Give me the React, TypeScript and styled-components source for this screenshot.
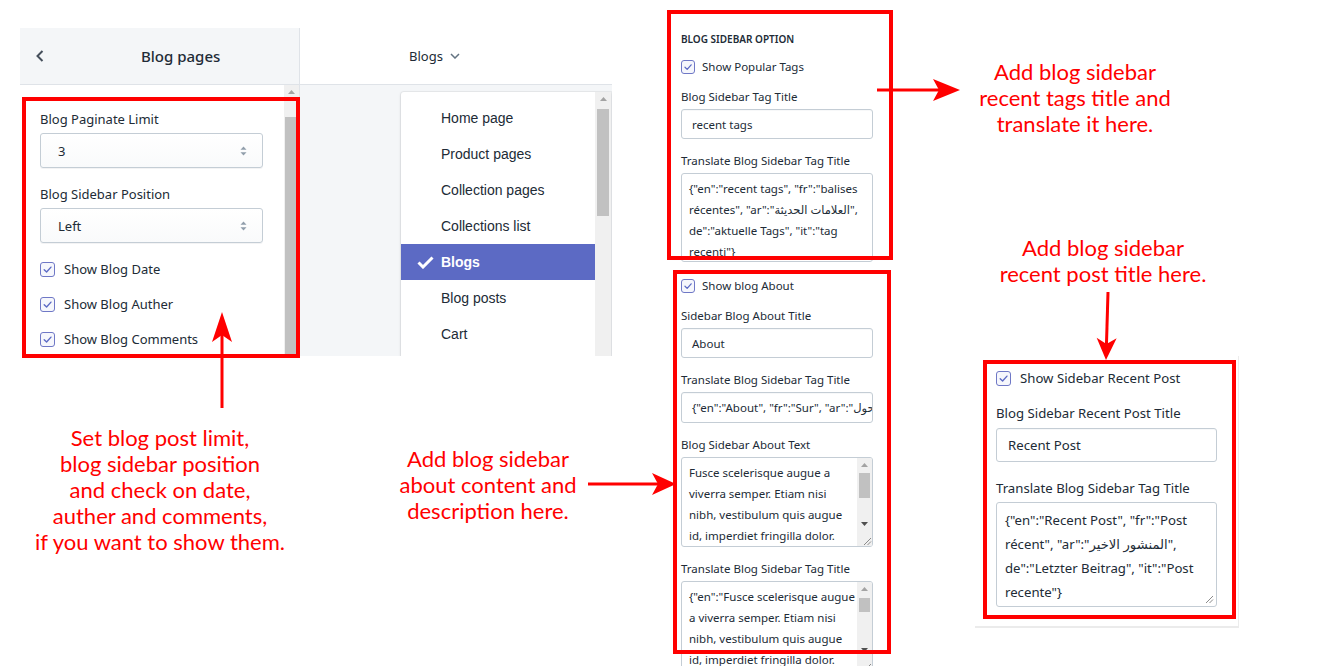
import React from 'react';
import styled, { createGlobalStyle } from 'styled-components';

const GlobalStyle = createGlobalStyle`
  html, body {
    margin: 0;
    padding: 0;
    background: #ffffff;
  }
  body {
    font-family: "Noto Sans", "DejaVu Sans", sans-serif;
  }
`;

const UI = `"Noto Sans", "DejaVu Sans", sans-serif`;
const RED = '#ff0000';

const Canvas = styled.div`
  position: relative;
  width: 1333px;
  height: 666px;
  overflow: hidden;
  background: #ffffff;
`;

/* ---------- left screenshot: theme editor ---------- */

const EditorShot = styled.div`
  position: absolute;
  left: 20px;
  top: 28px;
  width: 592px;
  height: 328px;
  display: flex;
  overflow: hidden;
  font-family: ${UI};
  color: #212b36;
`;

const Sidebar = styled.aside`
  width: 280px;
  flex: none;
  display: flex;
  flex-direction: column;
  border-right: 1px solid #dfe3e8;
  box-sizing: border-box;
`;

const SidebarHeader = styled.div`
  height: 57px;
  flex: none;
  box-sizing: border-box;
  background: #f4f6f8;
  border-bottom: 1px solid #dfe3e8;
  display: flex;
  align-items: center;
  padding-left: 16px;
  gap: 97px;
  font-size: 15px;
  font-weight: 500;
`;

const SidebarBody = styled.div`
  flex: 1;
  display: flex;
  background: #ffffff;
  min-height: 0;
`;

const SettingsList = styled.div`
  flex: 1;
  padding: 24px 21px 0 20px;
  display: flex;
  flex-direction: column;
`;

const Field = styled.div<{ $gap: number; $after: number }>`
  display: flex;
  flex-direction: column;
  gap: ${p => p.$gap}px;
  margin-bottom: ${p => p.$after}px;
`;

const Label = styled.div<{ $size: number; $lh: number }>`
  font-size: ${p => p.$size}px;
  line-height: ${p => p.$lh}px;
  white-space: nowrap;
  color: #212b36;
`;

const SelectBox = styled.div`
  height: 35px;
  box-sizing: border-box;
  border: 1px solid #c4cdd5;
  border-radius: 3px;
  background: linear-gradient(180deg, #ffffff, #f9fafb);
  box-shadow: 0 1px 0 rgba(22, 29, 37, 0.05);
  display: flex;
  align-items: center;
  justify-content: space-between;
  padding: 0 15px 0 17px;
  font-size: 13px;
`;

const CheckRows = styled.div<{ $gap: number }>`
  display: flex;
  flex-direction: column;
  gap: ${p => p.$gap}px;
`;

const CheckRow = styled.label<{ $size: number; $lh: number; $gap: number; $after?: number }>`
  display: flex;
  align-items: center;
  gap: ${p => p.$gap}px;
  font-size: ${p => p.$size}px;
  line-height: ${p => p.$lh}px;
  margin-bottom: ${p => p.$after ?? 0}px;
  white-space: nowrap;
  color: #212b36;
`;

const Box = styled.span<{ $size: number }>`
  width: ${p => p.$size}px;
  height: ${p => p.$size}px;
  flex: none;
  box-sizing: border-box;
  border: 1px solid #6f78c6;
  border-radius: 3px;
  background: #f6f7fc;
  display: inline-flex;
  align-items: center;
  justify-content: center;
`;

const BarTrack = styled.div<{ $w: number }>`
  width: ${p => p.$w}px;
  flex: none;
  background: #f0f0f0;
  display: flex;
  flex-direction: column;
  align-items: center;
`;

const BarArrow = styled.div`
  height: 14px;
  flex: none;
  display: flex;
  align-items: center;
  justify-content: center;
`;

const BarThumb = styled.div<{ $top: number; $h?: number; $inset: number }>`
  align-self: stretch;
  margin: ${p => p.$top}px ${p => p.$inset}px 0;
  background: #c1c1c1;
  ${p => (p.$h ? `height: ${p.$h}px; flex: none;` : 'flex: 1;')}
`;

const Preview = styled.div`
  flex: 1;
  display: flex;
  flex-direction: column;
  min-width: 0;
`;

const PreviewHeader = styled.div`
  height: 57px;
  flex: none;
  box-sizing: border-box;
  border-bottom: 1px solid #dfe3e8;
  background: #ffffff;
  display: flex;
  align-items: center;
  gap: 7px;
  padding-left: 109px;
  font-size: 13px;
  color: #212b36;
`;

const PreviewBody = styled.div`
  flex: 1;
  background: #f4f6f8;
  padding: 7px 0 0 101px;
  display: flex;
  min-height: 0;
`;

const Dropdown = styled.div`
  width: 210px;
  display: flex;
  background: #ffffff;
  border-radius: 3px 0 0 0;
  box-shadow: 0 0 0 1px rgba(63, 63, 68, 0.06), 0 1px 3px rgba(63, 63, 68, 0.18);
  overflow: hidden;
`;

const MenuList = styled.ul`
  flex: 1;
  list-style: none;
  margin: 0;
  padding: 8px 0 0;
`;

const MenuItem = styled.li<{ $active?: boolean }>`
  height: 36px;
  display: flex;
  align-items: center;
  padding-left: 16px;
  font-family: "Liberation Sans", Arial, sans-serif;
  font-size: 14px;
  color: ${p => (p.$active ? '#ffffff' : '#212b36')};
  background: ${p => (p.$active ? '#5c6ac4' : 'transparent')};
  font-weight: ${p => (p.$active ? 600 : 400)};
`;

const CheckSlot = styled.span`
  width: 24px;
  flex: none;
  display: flex;
  align-items: center;
`;

/* ---------- form screenshots ---------- */

const FormShot = styled.div<{ $x: number; $y: number; $w: number; $h: number; $pad: string; $edge?: boolean }>`
  position: absolute;
  left: ${p => p.$x}px;
  top: ${p => p.$y}px;
  width: ${p => p.$w}px;
  height: ${p => p.$h}px;
  box-sizing: border-box;
  padding: ${p => p.$pad};
  background: #ffffff;
  overflow: hidden;
  font-family: ${UI};
  color: #212b36;
  ${p => (p.$edge ? 'border-right: 1px solid #ececec; border-bottom: 2px solid #ebebeb;' : '')}
`;

const FormColumn = styled.div<{ $w: number }>`
  width: ${p => p.$w}px;
  display: flex;
  flex-direction: column;
`;

const SectionHeading = styled.div`
  font-size: 10px;
  line-height: 18px;
  font-weight: 600;
  margin-bottom: 10px;
`;

const TextInput = styled.div<{ $h: number; $size: number; $padL: number }>`
  height: ${p => p.$h}px;
  box-sizing: border-box;
  border: 1px solid #c4cdd5;
  border-radius: 3px;
  box-shadow: inset 0 1px 0 rgba(99, 115, 129, 0.05);
  display: flex;
  align-items: center;
  padding: 0 8px 0 ${p => p.$padL}px;
  font-size: ${p => p.$size}px;
  white-space: nowrap;
  overflow: hidden;
`;

const TextArea = styled.div<{ $h: number; $size: number; $lh: number; $pad: string }>`
  position: relative;
  height: ${p => p.$h}px;
  box-sizing: border-box;
  border: 1px solid #c4cdd5;
  border-radius: 3px;
  padding: ${p => p.$pad};
  font-size: ${p => p.$size}px;
  line-height: ${p => p.$lh}px;
  overflow: hidden;
`;

const Line = styled.div`
  white-space: nowrap;
`;

const AreaScroll = styled.div`
  position: absolute;
  right: 0;
  top: 0;
  bottom: 0;
  width: 15px;
  background: #f0f0f0;
  display: flex;
  flex-direction: column;
`;

const Spacer = styled.div`
  flex: 1;
`;

const Corner = styled.div`
  height: 15px;
  flex: none;
  display: flex;
  align-items: flex-end;
  justify-content: flex-end;
  background: #f0f0f0;
`;

const Grip = styled.span`
  position: absolute;
  right: 2px;
  bottom: 2px;
  display: flex;
`;

/* ---------- annotation layer ---------- */

const Highlight = styled.div<{ $x: number; $y: number; $w: number; $h: number }>`
  position: absolute;
  left: ${p => p.$x}px;
  top: ${p => p.$y}px;
  width: ${p => p.$w}px;
  height: ${p => p.$h}px;
  box-sizing: border-box;
  border: 4px solid ${RED};
  pointer-events: none;
`;

const Note = styled.div<{ $x: number; $y: number; $w: number }>`
  position: absolute;
  left: ${p => p.$x}px;
  top: ${p => p.$y}px;
  width: ${p => p.$w}px;
  text-align: center;
  font-family: Lato, "Liberation Sans", sans-serif;
  font-size: 22px;
  line-height: 26px;
  color: ${RED};
  white-space: nowrap;
`;

const ArrowLayer = styled.svg`
  position: absolute;
  left: 0;
  top: 0;
  width: 1333px;
  height: 666px;
  pointer-events: none;
`;

/* ---------- small drawings ---------- */

const Tick = ({ size }: { size: number }) => (
  <Box $size={size}>
    <svg width={size - 4} height={size - 4} viewBox="0 0 12 12">
      <path d="M2.4 6.3 L5 8.8 L9.8 3.4" stroke="#5c6ac4" strokeWidth="1.5" fill="none" strokeLinecap="round" strokeLinejoin="round" />
    </svg>
  </Box>
);

const UpDown = () => (
  <svg width="7" height="10" viewBox="0 0 7 10">
    <path d="M3.5 0.5 L6.5 3.8 H0.5 Z" fill="#919eab" />
    <path d="M3.5 9.5 L0.5 6.2 H6.5 Z" fill="#919eab" />
  </svg>
);

const Tri = ({ down }: { down?: boolean }) => (
  <svg width="7" height="4" viewBox="0 0 7 4">
    <path d={down ? 'M0 0 H7 L3.5 4 Z' : 'M0 4 H7 L3.5 0 Z'} fill={down ? '#505050' : '#a3a3a3'} />
  </svg>
);

const ResizeMark = () => (
  <svg width="9" height="9" viewBox="0 0 9 9">
    <path d="M1 8 L8 1 M4.5 8 L8 4.5" stroke="#8a8a8a" strokeWidth="1" />
  </svg>
);

function arrow(x1: number, y1: number, x2: number, y2: number, len: number, half: number, notch: number) {
  const L = Math.hypot(x2 - x1, y2 - y1);
  const ux = (x2 - x1) / L;
  const uy = (y2 - y1) / L;
  const px = -uy;
  const py = ux;
  const bx = x2 - ux * len;
  const by = y2 - uy * len;
  const nx = x2 - ux * (len - notch);
  const ny = y2 - uy * (len - notch);
  const pts = [
    [x2, y2],
    [bx + px * half, by + py * half],
    [nx, ny],
    [bx - px * half, by - py * half],
  ]
    .map(p => p.join(','))
    .join(' ');
  return (
    <g key={`${x1}-${y1}`}>
      <line x1={x1} y1={y1} x2={nx} y2={ny} stroke={RED} strokeWidth="3" />
      <polygon points={pts} fill={RED} />
    </g>
  );
}

const pages = ['Home page', 'Product pages', 'Collection pages', 'Collections list', 'Blogs', 'Blog posts', 'Cart'];

const App: React.FC = () => {
  return (
    <Canvas>
      <GlobalStyle />

      <EditorShot>
        <Sidebar>
          <SidebarHeader>
            <svg width="8" height="12" viewBox="0 0 8 12">
              <path d="M6.5 1 L1.5 6 L6.5 11" stroke="#454f5b" strokeWidth="2" fill="none" />
            </svg>
            <span>Blog pages</span>
          </SidebarHeader>
          <SidebarBody>
            <SettingsList>
              <Field $gap={4} $after={16}>
                <Label $size={13} $lh={20}>Blog Paginate Limit</Label>
                <SelectBox>
                  <span>3</span>
                  <UpDown />
                </SelectBox>
              </Field>
              <Field $gap={4} $after={16}>
                <Label $size={13} $lh={20}>Blog Sidebar Position</Label>
                <SelectBox>
                  <span>Left</span>
                  <UpDown />
                </SelectBox>
              </Field>
              <CheckRows $gap={15}>
                {['Show Blog Date', 'Show Blog Auther', 'Show Blog Comments'].map(t => (
                  <CheckRow key={t} $size={13} $lh={20} $gap={9}>
                    <Tick size={15} />
                    {t}
                  </CheckRow>
                ))}
              </CheckRows>
            </SettingsList>
            <BarTrack $w={15}>
              <BarArrow>
                <Tri />
              </BarArrow>
              <BarThumb $top={18} $inset={1} />
            </BarTrack>
          </SidebarBody>
        </Sidebar>

        <Preview>
          <PreviewHeader>
            <span>Blogs</span>
            <svg width="10" height="6" viewBox="0 0 10 6">
              <path d="M1 1 L5 5 L9 1" stroke="#637381" strokeWidth="1.5" fill="none" />
            </svg>
          </PreviewHeader>
          <PreviewBody>
            <Dropdown>
              <MenuList>
                {pages.map(p => (
                  <MenuItem key={p} $active={p === 'Blogs'}>
                    <CheckSlot>
                      {p === 'Blogs' && (
                        <svg width="17" height="13" viewBox="0 0 17 13">
                          <path d="M1.5 6.5 L6 11 L15.5 1.5" stroke="#ffffff" strokeWidth="3" fill="none" />
                        </svg>
                      )}
                    </CheckSlot>
                    {p}
                  </MenuItem>
                ))}
              </MenuList>
              <BarTrack $w={16}>
                <BarArrow>
                  <Tri />
                </BarArrow>
                <BarThumb $top={3} $h={107} $inset={2} />
              </BarTrack>
            </Dropdown>
          </PreviewBody>
        </Preview>
      </EditorShot>

      <FormShot $x={667} $y={9} $w={218} $h={657} $pad="21px 0 0 14px">
        <FormColumn $w={192}>
          <SectionHeading>BLOG SIDEBAR OPTION</SectionHeading>
          <CheckRow $size={11.5} $lh={18} $gap={7} $after={12}>
            <Tick size={14} />
            Show Popular Tags
          </CheckRow>
          <Field $gap={3} $after={13}>
            <Label $size={11.5} $lh={18}>Blog Sidebar Tag Title</Label>
            <TextInput $h={30} $size={11.5} $padL={10}>recent tags</TextInput>
          </Field>
          <Field $gap={3} $after={15}>
            <Label $size={11.5} $lh={18}>Translate Blog Sidebar Tag Title</Label>
            <TextArea $h={89} $size={11.5} $lh={21} $pad="4px 7px">
              <Line>{'{"en":"recent tags", "fr":"balises'}</Line>
              <Line>{'récentes", "ar":"العلامات الحديثة",'}</Line>
              <Line>{'de":"aktuelle Tags", "it":"tag'}</Line>
              <Line>{'recenti"}'}</Line>
            </TextArea>
          </Field>
          <CheckRow $size={11.5} $lh={18} $gap={7} $after={12}>
            <Tick size={14} />
            Show blog About
          </CheckRow>
          <Field $gap={3} $after={13}>
            <Label $size={11.5} $lh={18}>Sidebar Blog About Title</Label>
            <TextInput $h={30} $size={11.5} $padL={10}>About</TextInput>
          </Field>
          <Field $gap={3} $after={13}>
            <Label $size={11.5} $lh={18}>Translate Blog Sidebar Tag Title</Label>
            <TextInput $h={31} $size={11.5} $padL={10}>
              {'{"en":"About", "fr":"Sur", "ar":"حول'}
            </TextInput>
          </Field>
          <Field $gap={3} $after={13}>
            <Label $size={11.5} $lh={18}>Blog Sidebar About Text</Label>
            <TextArea $h={90} $size={11.5} $lh={21} $pad="4px 18px 0 7px">
              <Line>Fusce scelerisque augue a</Line>
              <Line>viverra semper. Etiam nisi</Line>
              <Line>nibh, vestibulum quis augue</Line>
              <Line>id, imperdiet fringilla dolor.</Line>
              <AreaScroll>
                <BarArrow>
                  <Tri />
                </BarArrow>
                <BarThumb $top={1} $h={25} $inset={2} />
                <Spacer />
                <BarArrow>
                  <Tri down />
                </BarArrow>
                <Corner>
                  <ResizeMark />
                </Corner>
              </AreaScroll>
            </TextArea>
          </Field>
          <Field $gap={3} $after={0}>
            <Label $size={11.5} $lh={18}>Translate Blog Sidebar Tag Title</Label>
            <TextArea $h={92} $size={11.5} $lh={21} $pad="4px 18px 0 7px">
              <Line>{'{"en":"Fusce scelerisque augue'}</Line>
              <Line>a viverra semper. Etiam nisi</Line>
              <Line>nibh, vestibulum quis augue</Line>
              <Line>id, imperdiet fringilla dolor.</Line>
              <AreaScroll>
                <BarArrow>
                  <Tri />
                </BarArrow>
                <BarThumb $top={2} $h={14} $inset={2} />
                <Spacer />
                <BarArrow>
                  <Tri down />
                </BarArrow>
                <Corner>
                  <ResizeMark />
                </Corner>
              </AreaScroll>
            </TextArea>
          </Field>
        </FormColumn>
      </FormShot>

      <FormShot $x={975} $y={356} $w={264} $h={272} $pad="12px 0 0 21px" $edge>
        <FormColumn $w={221}>
          <CheckRow $size={13.2} $lh={20} $gap={9} $after={15}>
            <Tick size={15} />
            Show Sidebar Recent Post
          </CheckRow>
          <Field $gap={5} $after={16}>
            <Label $size={13.2} $lh={20}>Blog Sidebar Recent Post Title</Label>
            <TextInput $h={34} $size={13.2} $padL={11}>Recent Post</TextInput>
          </Field>
          <Field $gap={4} $after={0}>
            <Label $size={13.2} $lh={20}>Translate Blog Sidebar Tag Title</Label>
            <TextArea $h={105} $size={13.2} $lh={24} $pad="5px 8px 0 8px">
              <Line>{'{"en":"Recent Post", "fr":"Post'}</Line>
              <Line>{'récent", "ar":"المنشور الاخير",'}</Line>
              <Line>{'de":"Letzter Beitrag", "it":"Post'}</Line>
              <Line>{'recente"}'}</Line>
              <Grip>
                <ResizeMark />
              </Grip>
            </TextArea>
          </Field>
        </FormColumn>
      </FormShot>

      <Highlight $x={22} $y={97} $w={278} $h={261} />
      <Highlight $x={667} $y={10} $w={226} $h={250} />
      <Highlight $x={673} $y={270} $w={218} $h={384} />
      <Highlight $x={983} $y={360} $w={253} $h={259} />

      <Note $x={0} $y={425} $w={320}>
        Set blog post limit,
        <br />
        blog sidebar position
        <br />
        and check on date,
        <br />
        auther and comments,
        <br />
        if you want to show them.
      </Note>
      <Note $x={368} $y={446} $w={240}>
        Add blog sidebar
        <br />
        about content and
        <br />
        description here.
      </Note>
      <Note $x={955} $y={59} $w={240}>
        Add blog sidebar
        <br />
        recent tags title and
        <br />
        translate it here.
      </Note>
      <Note $x={983} $y={235} $w={240}>
        Add blog sidebar
        <br />
        recent post title here.
      </Note>

      <ArrowLayer viewBox="0 0 1333 666">
        {arrow(222, 408, 222, 312, 30, 10, 7)}
        {arrow(588, 484, 676, 484, 24, 11, 6)}
        {arrow(877, 90, 960, 90, 27, 11, 6)}
        {arrow(1108, 292, 1106, 360, 22, 10, 6)}
      </ArrowLayer>
    </Canvas>
  );
};

export default App;
